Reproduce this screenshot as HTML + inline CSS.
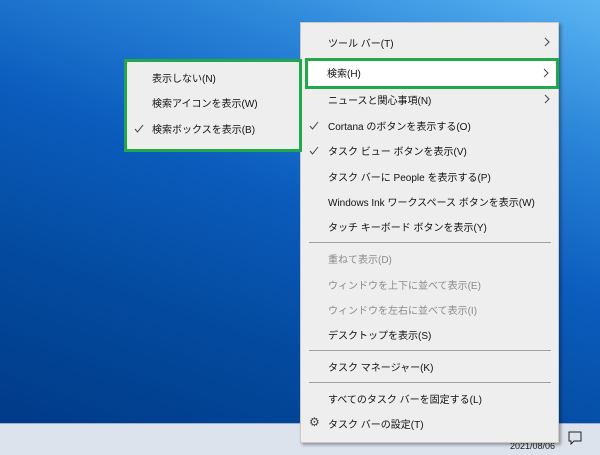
<!DOCTYPE html><html><head><meta charset="utf-8"><style>
*{margin:0;padding:0;box-sizing:border-box}
body{width:600px;height:455px;overflow:hidden;position:relative;font-family:"Liberation Sans","Noto Sans CJK JP",sans-serif;font-size:10px;color:#111;
background:linear-gradient(200deg,#5ab4f2 0%,#2a84d8 22%,#0b5cbd 45%,#034a9e 70%,#003784 100%)}
.tb{position:absolute;left:0;top:423px;width:600px;height:32px;background:#dde3ec;border-top:1px solid #9bb0cf}
.menu{position:absolute;left:300px;top:22px;width:259px;height:421px;background:#eeeeee;border:1px solid #c8c8c8;box-shadow:2px 2px 3px rgba(0,0,0,.35)}
.it{position:absolute;left:27px;white-space:nowrap}
.dis{color:#8a8a8a}
.ar{position:absolute;left:243px}
.ck{position:absolute;left:8px}
.sep{position:absolute;left:8px;width:242px;height:1px;background:#a0a0a0}
.hl{position:absolute;left:305px;top:58px;width:254px;height:31px;background:#fff;border:3px solid #22a84a}
.sub{position:absolute;left:124px;top:59px;width:178px;height:93px;background:#eeeeee;border:3px solid #22a84a}
.sub .it{left:25px}
.tm{position:absolute;left:510px;top:441px;font-size:9px;color:#222}
</style></head><body>
<div class="tb"></div>
<div class="tm">2021/08/06</div>
<svg style="position:absolute;left:568px;top:431px" width="14" height="14"><path d="M1 1H13V10H6L3 13V10H1Z" fill="none" stroke="#222" stroke-width="1"/></svg>
<div class="menu">
<div class="it" style="top:12px">ツール バー(T)</div><svg class="ar" style="top:14px" width="6" height="10"><path d="M1 1L5 5L1 9" fill="none" stroke="#444"/></svg>
<div class="it" style="top:69px">ニュースと関心事項(N)</div><svg class="ar" style="top:71px" width="6" height="10"><path d="M1 1L5 5L1 9" fill="none" stroke="#444"/></svg>
<svg class="ck" style="top:98px" width="10" height="9"><path d="M1 5L3.5 8L9 1" fill="none" stroke="#444"/></svg><div class="it" style="top:95px">Cortana のボタンを表示する(O)</div>
<svg class="ck" style="top:123px" width="10" height="9"><path d="M1 5L3.5 8L9 1" fill="none" stroke="#444"/></svg><div class="it" style="top:120px">タスク ビュー ボタンを表示(V)</div>
<div class="it" style="top:146px">タスク バーに People を表示する(P)</div>
<div class="it" style="top:171px">Windows Ink ワークスペース ボタンを表示(W)</div>
<div class="it" style="top:196px">タッチ キーボード ボタンを表示(Y)</div>
<div class="sep" style="top:219px"></div>
<div class="it dis" style="top:228px">重ねて表示(D)</div>
<div class="it dis" style="top:254px">ウィンドウを上下に並べて表示(E)</div>
<div class="it dis" style="top:279px">ウィンドウを左右に並べて表示(I)</div>
<div class="it" style="top:304px">デスクトップを表示(S)</div>
<div class="sep" style="top:327px"></div>
<div class="it" style="top:336px">タスク マネージャー(K)</div>
<div class="sep" style="top:359px"></div>
<div class="it" style="top:368px">すべてのタスク バーを固定する(L)</div>
<div class="ck" style="top:392px;font-size:12px;color:#444">⚙</div><div class="it" style="top:393px">タスク バーの設定(T)</div>
</div>
<div class="hl"><div style="position:absolute;left:19px;top:4px">検索(H)</div><svg style="position:absolute;left:235px;top:7px" width="6" height="10"><path d="M1 1L5 5L1 9" fill="none" stroke="#444"/></svg></div>
<div class="sub">
<div class="it" style="top:8px">表示しない(N)</div>
<div class="it" style="top:33px">検索アイコンを表示(W)</div>
<svg class="ck" style="top:62px;left:7px" width="10" height="9"><path d="M1 5L3.5 8L9 1" fill="none" stroke="#444"/></svg><div class="it" style="top:59px">検索ボックスを表示(B)</div>
</div>
</body></html>
